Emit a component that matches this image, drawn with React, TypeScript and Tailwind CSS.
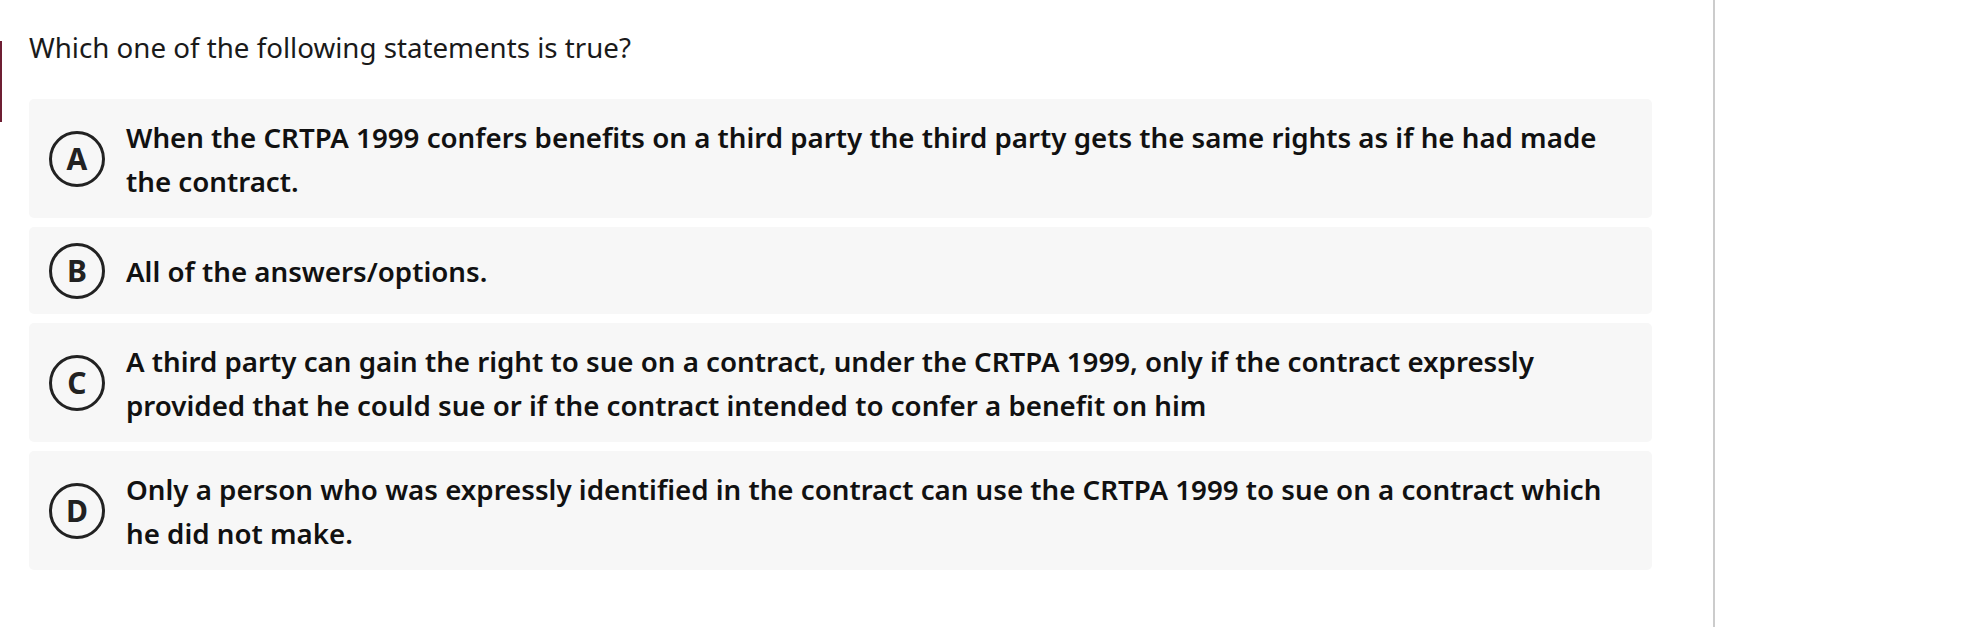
import React from "react";

type Option = {
  letter: string;
  text: string;
};

const options: Option[] = [
  {
    letter: "A",
    text: "When the CRTPA 1999 confers benefits on a third party the third party gets the same rights as if he had made the contract.",
  },
  { letter: "B", text: "All of the answers/options." },
  {
    letter: "C",
    text: "A third party can gain the right to sue on a contract, under the CRTPA 1999, only if the contract expressly provided that he could sue or if the contract intended to confer a benefit on him",
  },
  {
    letter: "D",
    text: "Only a person who was expressly identified in the contract can use the CRTPA 1999 to sue on a contract which he did not make.",
  },
];

function OptionCard({ option }: { option: Option }) {
  return (
    <div className="flex items-center rounded-[5px] bg-[#f7f7f7] py-[15.5px] pl-[20px] pr-[40px]">
      <span className="flex h-[56px] w-[56px] min-w-[56px] shrink-0 items-center justify-center rounded-full border-[3px] border-[#222222] text-[30px] font-bold leading-none text-[#222222]">
        {option.letter}
      </span>
      <p className="ml-[21px] text-[27.7px] font-semibold leading-[44px] text-[#111111]">{option.text}</p>
    </div>
  );
}

export default function App() {
  return (
    <div className="flex h-[627px] w-full bg-white font-['Noto_Sans',sans-serif]">
      <div className="relative w-[1715px] shrink-0 border-r-2 border-[#cccccc] pl-[29px] pr-[61px] pt-[28px]">
        <div className="absolute left-0 top-[41px] h-[81px] w-[2px] bg-[#6e1e33]" />
        <h2 className="text-[27.7px] font-normal leading-[38px] text-[#1a1a1a]">Which one of the following statements is true?</h2>
        <div className="mt-[33px] flex flex-col gap-[9px]">
          {options.map((o) => (
            <OptionCard key={o.letter} option={o} />
          ))}
        </div>
      </div>
      <div className="flex-1" />
    </div>
  );
}
